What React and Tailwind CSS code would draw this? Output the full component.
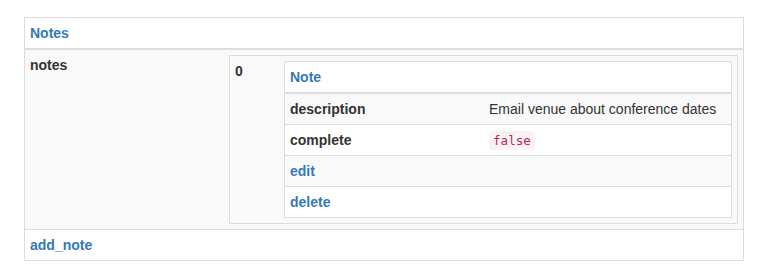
import React from "react";

const Code = ({ children }) => (
    <code className="font-['DejaVu_Sans_Mono',Menlo,monospace] text-[12.6px] leading-none text-[#c7254e] bg-[#f9f2f4] px-[4px] py-[2px] rounded-[4px]">
        {children}
    </code>
);

const NoteTable = () => {
    const rows = [
        { label: "description", value: "Email venue about conference dates" },
        { label: "complete", value: <Code>false</Code> },
    ];
    return (
        <div className="bg-white border border-[#ddd]">
            <div className="p-[5px] border-b-2 border-[#ddd] font-bold text-[#337ab7]">Note</div>
            {rows.map((r, i) => (
                <div key={r.label} className={`flex border-b border-[#ddd] ${i % 2 === 0 ? "bg-[#f9f9f9]" : "bg-white"}`}>
                    <div className="w-[199px] shrink-0 p-[5px] font-bold">{r.label}</div>
                    <div className="flex-1 p-[5px]">{r.value}</div>
                </div>
            ))}
            <div className="p-[5px] border-b border-[#ddd] bg-[#f9f9f9] font-bold text-[#337ab7]">edit</div>
            <div className="p-[5px] bg-white font-bold text-[#337ab7]">delete</div>
        </div>
    );
};

const App = () => {
    return (
        <div className="min-h-screen bg-white pt-[17px] pl-[24px] font-['Liberation_Sans',Arial,sans-serif] text-[14px] leading-5 text-[#333]">
            <div className="w-[720px] border border-[#ddd]">
                <div className="p-[5px] border-b-2 border-[#ddd] font-bold text-[#337ab7]">Notes</div>

                <div className="flex bg-[#f9f9f9] border-b border-[#ddd]">
                    <div className="w-[199px] shrink-0 p-[5px] font-bold">notes</div>
                    <div className="flex-1 p-[5px]">
                        <div className="flex border border-[#ddd] bg-[#f9f9f9]">
                            <div className="w-[49px] shrink-0 p-[5px] font-bold">0</div>
                            <div className="flex-1 p-[5px]">
                                <NoteTable />
                            </div>
                        </div>
                    </div>
                </div>

                <div className="p-[5px] font-bold text-[#337ab7]">add_note</div>
            </div>
        </div>
    );
};

export default App;
